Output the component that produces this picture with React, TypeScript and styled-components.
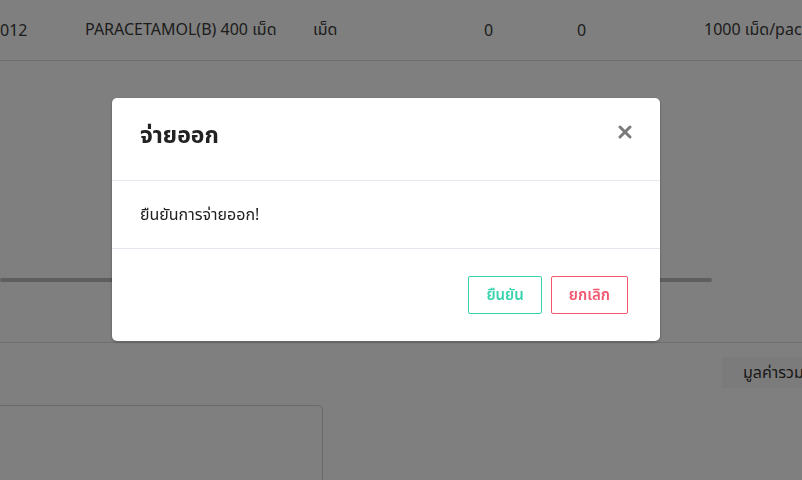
import styled, {createGlobalStyle} from 'styled-components';

const GlobalStyle = createGlobalStyle`
  html, body {
    margin: 0;
    padding: 0;
    background: #fff;
    overflow: hidden;
  }
  body {
    font-family: "Noto Sans", "Noto Sans Thai", "Liberation Sans", sans-serif;
    color: #333;
  }
`;

const columns = ['012', 'PARACETAMOL(B) 400 เม็ด', 'เม็ด', '0', '0', '1000 เม็ด/pac'];

export default function App() {
    return (
        <>
            <GlobalStyle/>
            <Page>
                <TableRow>
                    {columns.map((text, i) => <Cell key={i}>{text}</Cell>)}
                </TableRow>

                <ScrollArea>
                    <ScrollBar/>
                </ScrollArea>

                <Summary>
                    <SummaryLabel>มูลค่ารวม</SummaryLabel>
                </Summary>

                <NoteBox/>
            </Page>

            <Backdrop>
                <Modal>
                    <ModalHeader>
                        <ModalTitle>จ่ายออก</ModalTitle>
                        <CloseButton type="button" aria-label="close">
                            <svg width="14" height="14" viewBox="0 0 14 14">
                                <path d="M2 2 L12 12 M12 2 L2 12" stroke="#7a7a7a" strokeWidth="3" strokeLinecap="round"/>
                            </svg>
                        </CloseButton>
                    </ModalHeader>
                    <ModalBody>ยืนยันการจ่ายออก!</ModalBody>
                    <ModalFooter>
                        <OutlineButton $color="#38d3ad">ยืนยัน</OutlineButton>
                        <OutlineButton $color="#f2576f">ยกเลิก</OutlineButton>
                    </ModalFooter>
                </Modal>
            </Backdrop>
        </>
    );
}


const Page = styled.div`
  width: 802px;
  height: 480px;
  overflow: hidden;
`;

const TableRow = styled.div`
  display: grid;
  grid-template-columns: 85px 228px 171px 93px 127px 1fr;
  align-items: center;
  height: 60px;
  border-bottom: 1px solid #dedede;
  font-size: 16px;
  color: #3a3a3a;
  white-space: nowrap;
  overflow: hidden;
`;

const Cell = styled.div`
  overflow: hidden;
`;

const ScrollArea = styled.div`
  height: 282px;
  display: flex;
  align-items: flex-end;
  box-sizing: border-box;
  padding-bottom: 60px;
  border-bottom: 1px solid #e0e0e0;
`;

const ScrollBar = styled.div`
  width: 712px;
  height: 4px;
  border-radius: 2px;
  background: #bdbdbd;
`;

const Summary = styled.div`
  display: flex;
  justify-content: flex-end;
  padding-top: 14px;
`;

const SummaryLabel = styled.div`
  width: 80px;
  height: 31px;
  box-sizing: border-box;
  padding-left: 21px;
  background: #f6f6f6;
  font-size: 16px;
  line-height: 31px;
  color: #333;
  white-space: nowrap;
  overflow: hidden;
`;

const NoteBox = styled.div`
  margin-top: 17px;
  margin-left: -20px;
  width: 341px;
  height: 120px;
  border: 1px solid #d4d4d4;
  border-radius: 5px;
`;

const Backdrop = styled.div`
  position: fixed;
  inset: 0;
  background: rgba(0, 0, 0, 0.5);
  display: flex;
  justify-content: flex-start;
  align-items: flex-start;
  padding: 98px 0 0 112px;
  box-sizing: border-box;
`;

const Modal = styled.div`
  width: 548px;
  background: #fff;
  border-radius: 5px;
  box-shadow: 0 1px 3px rgba(0, 0, 0, 0.3);
  overflow: hidden;
`;

const ModalHeader = styled.div`
  display: flex;
  align-items: center;
  justify-content: space-between;
  height: 83px;
  padding: 0 28px 8px;
  border-bottom: 1px solid #e3e8ee;
  box-sizing: border-box;
`;

const ModalTitle = styled.div`
  font-size: 23px;
  font-weight: 700;
  color: #222;
`;

const CloseButton = styled.button`
  border: none;
  background: none;
  padding: 0;
  margin-top: -6px;
  display: flex;
  cursor: pointer;
`;

const ModalBody = styled.div`
  height: 67px;
  display: flex;
  align-items: center;
  padding: 0 28px;
  font-size: 16px;
  color: #222;
  border-bottom: 1px solid #e3e8ee;
`;

const ModalFooter = styled.div`
  display: flex;
  justify-content: flex-end;
  gap: 9px;
  padding: 27px 32px 27px;
`;

const OutlineButton = styled.button<{ $color: string }>`
  height: 38px;
  padding: 0 17px;
  background: #fff;
  border: 1px solid ${p => p.$color};
  border-radius: 2px;
  color: ${p => p.$color};
  font-family: inherit;
  font-size: 15px;
  font-weight: 600;
  cursor: pointer;
`;
